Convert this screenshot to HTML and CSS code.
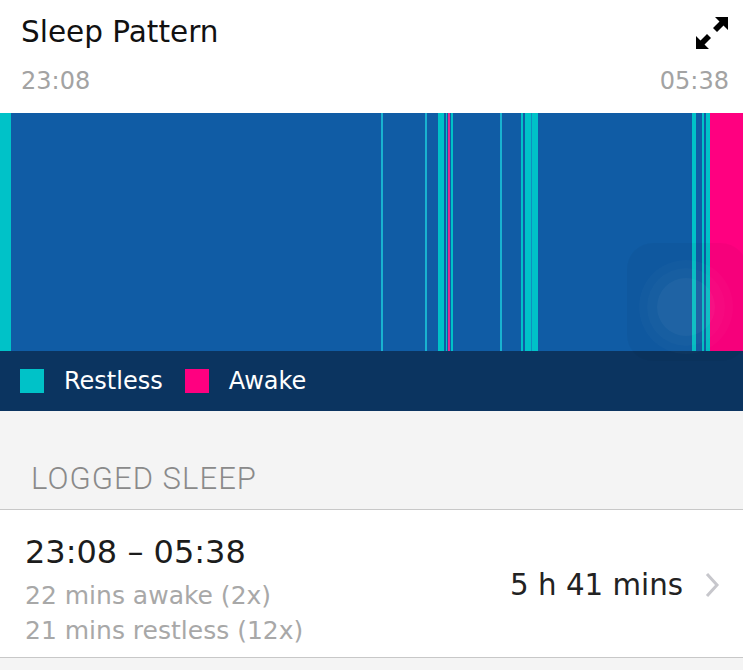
FILE: index.html
```html
<!DOCTYPE html>
<html>
<head>
<meta charset="utf-8">
<link rel="stylesheet" href="styles.css">
</head>
<body>
<div class="page">
  <header class="header">
    <div class="title-row">
      <h1 class="title">Sleep Pattern</h1>
      <svg class="expand" width="34" height="34" viewBox="0 0 34 34">
        <polygon points="33,1 33,14 28.5,9.5 22,16 18,12 24.5,5.5 20,1" fill="#000"/>
        <polygon points="1,33 1,20 5.5,24.5 12,18 16,22 9.5,28.5 14,33" fill="#000"/>
      </svg>
    </div>
    <div class="times">
      <span>23:08</span>
      <span>05:38</span>
    </div>
  </header>

  <section class="chart-wrap">
    <div class="chart">
      <div class="seg r" style="width:11px"></div>
      <div class="seg a" style="width:370px"></div>
      <div class="seg t" style="width:2px"></div>
      <div class="seg a" style="width:42px"></div>
      <div class="seg t" style="width:2px"></div>
      <div class="seg a" style="width:11px"></div>
      <div class="seg r" style="width:6px"></div>
      <div class="seg a" style="width:2px"></div>
      <div class="seg r" style="width:1px"></div>
      <div class="seg a" style="width:1px"></div>
      <div class="seg m" style="width:2px"></div>
      <div class="seg a" style="width:1px"></div>
      <div class="seg r" style="width:2px"></div>
      <div class="seg a" style="width:47px"></div>
      <div class="seg t" style="width:2px"></div>
      <div class="seg a" style="width:19px"></div>
      <div class="seg r" style="width:2px"></div>
      <div class="seg a" style="width:2px"></div>
      <div class="seg r" style="width:6px"></div>
      <div class="seg d" style="width:1px"></div>
      <div class="seg r" style="width:6px"></div>
      <div class="seg a" style="width:154px"></div>
      <div class="seg r" style="width:4px"></div>
      <div class="seg a" style="width:6px"></div>
      <div class="seg r" style="width:2px"></div>
      <div class="seg a" style="width:2px"></div>
      <div class="seg r" style="width:4px"></div>
      <div class="seg w" style="width:33px"></div>
    </div>
    <div class="legend">
      <span class="swatch swatch-r"></span><span class="legend-label">Restless</span>
      <span class="swatch swatch-w"></span><span class="legend-label">Awake</span>
    </div>
    <div class="touch">
      <div class="ring ring1"></div>
      <div class="ring ring2"></div>
      <div class="ring ring3"></div>
    </div>
  </section>

  <div class="section-head">LOGGED SLEEP</div>

  <div class="row">
    <div class="row-main">
      <div class="range">23:08 – 05:38</div>
      <div class="sub sub-first">22 mins awake (2x)</div>
      <div class="sub">21 mins restless (12x)</div>
    </div>
    <div class="row-side">
      <span class="duration">5 h 41 mins</span>
      <svg class="chev" width="16" height="26" viewBox="0 0 16 26">
        <polyline points="3,2 13,13 3,24" fill="none" stroke="#c7c7cc" stroke-width="3"/>
      </svg>
    </div>
  </div>
</div>
</body>
</html>
```

FILE: styles.css
```css
* { box-sizing: border-box; margin: 0; padding: 0; }
html, body { background: #f4f4f4; }
body { font-family: "DejaVu Sans", "Open Sans", sans-serif; }
.page { width: 743px; height: 670px; overflow: hidden; background: #f4f4f4; }

.header {
  height: 113px;
  background: #fff;
  padding: 12px 14px 0 21px;
  display: flex;
  flex-direction: column;
}
.title-row {
  display: flex;
  justify-content: space-between;
  align-items: flex-start;
  height: 44px;
}
.title {
  font-weight: 400;
  font-size: 29.5px;
  line-height: 40px;
  color: #111;
}
.expand { margin-top: 4px; }
.times {
  display: flex;
  justify-content: space-between;
  font-size: 24px;
  line-height: 32px;
  color: #a3a3a3;
  margin-top: 9px;
}

.chart-wrap { position: relative; }
.chart { display: flex; height: 238px; background: #105ca5; }
.seg { height: 100%; flex: none; }
.seg.a { background: #105ca5; }
.seg.r { background: #00c2c8; }
.seg.t { background: #19b2d0; }
.seg.d { background: #0f8fbf; }
.seg.w { background: #ff0080; }
.seg.m { background: #e0308f; }

.legend {
  height: 60px;
  background: #0b3460;
  display: flex;
  align-items: center;
  padding-left: 20px;
}
.swatch { width: 24px; height: 24px; flex: none; }
.swatch-r { background: #00c2c8; }
.swatch-w { background: #ff0080; margin-left: 22px; }
.legend-label {
  color: #fff;
  font-size: 24px;
  line-height: 30px;
  margin-left: 20px;
}

.touch {
  position: absolute;
  left: 627px;
  top: 130px;
  width: 120px;
  height: 118px;
  border-radius: 26px;
  background: rgba(0, 0, 0, 0.035);
}
.ring {
  position: absolute;
  border-radius: 50%;
  background: rgba(255, 255, 255, 0.02);
}
.ring1 { left: 12px; top: 17px; width: 94px; height: 94px; }
.ring2 { left: 20px; top: 25px; width: 78px; height: 78px; }
.ring3 { left: 30px; top: 35px; width: 58px; height: 58px; background: rgba(255,255,255,0.035); }

.section-head {
  height: 99px;
  background: #f4f4f4;
  border-bottom: 1px solid #c8c8c8;
  display: flex;
  align-items: flex-end;
  padding: 0 0 14px 31px;
  font-family: Roboto, "Liberation Sans", sans-serif;
  font-weight: 300;
  font-size: 31px;
  line-height: 32px;
  color: #8a8a8a;
  letter-spacing: 1.05px;
}

.row {
  height: 148px;
  background: #fff;
  border-bottom: 1px solid #c8c8c8;
  display: flex;
  justify-content: space-between;
  align-items: flex-start;
  padding: 22px 23px 0 25px;
}
.row-main { display: flex; flex-direction: column; }
.range {
  font-size: 32px;
  line-height: 40px;
  color: #1c1c1c;
}
.sub {
  font-size: 25px;
  line-height: 35px;
  color: #a8a8a8;
}
.sub-first { margin-top: 6px; }
.row-side { display: flex; align-items: center; gap: 21px; margin-top: 33px; }
.duration { font-size: 29.3px; line-height: 40px; color: #222; }
.chev { flex: none; }
```
